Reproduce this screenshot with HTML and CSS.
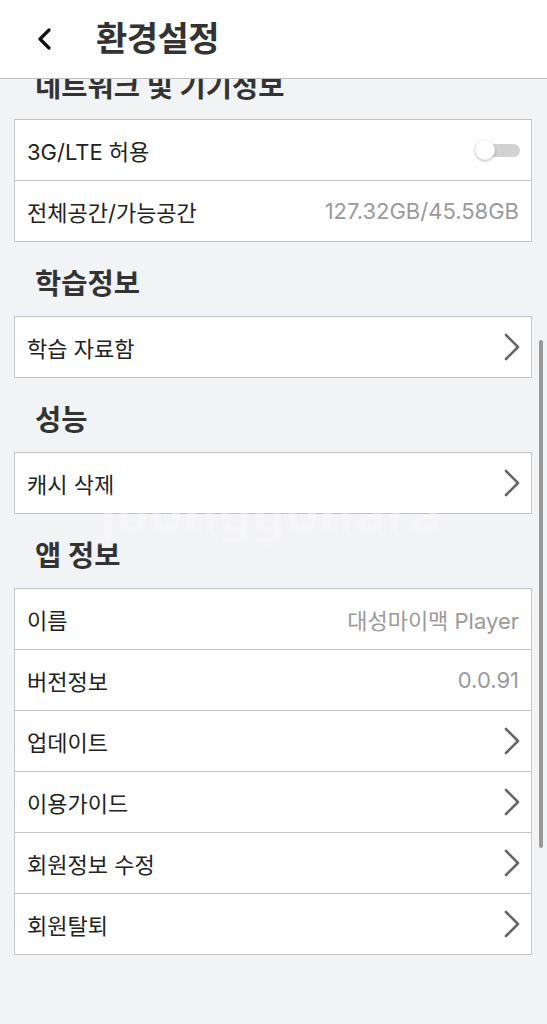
FILE: index.html
```html
<!DOCTYPE html>
<html lang="ko">
<head>
    <meta charset="UTF-8">
    <meta name="viewport" content="width=device-width, initial-scale=1.0">
    <title>환경설정</title>
    <link rel="stylesheet" href="styles.css">
</head>
<body>
    <div class="page">
        <header class="top-bar">
            <button class="back-button" type="button">
                <svg width="18" height="22" viewBox="0 0 18 22">
                    <path d="M13 2 L4 11 L13 20" fill="none" stroke="#111" stroke-width="3.2" stroke-linecap="round" stroke-linejoin="round"/>
                </svg>
            </button>
            <h1 class="top-title">환경설정</h1>
        </header>

        <main class="content">
            <div class="scroll-area">
                <h2 class="section-title first">네트워크 및 기기정보</h2>
                <div class="card">
                    <div class="row">
                        <span class="row-label">3G/LTE 허용</span>
                        <span class="toggle"><span class="toggle-knob"></span></span>
                    </div>
                    <div class="row">
                        <span class="row-label">전체공간/가능공간</span>
                        <span class="row-value">127.32GB/45.58GB</span>
                    </div>
                </div>

                <h2 class="section-title">학습정보</h2>
                <div class="card">
                    <div class="row">
                        <span class="row-label">학습 자료함</span>
                        <span class="chevron"><svg width="16" height="28" viewBox="0 0 16 28"><path d="M2 2 L14 14 L2 26" fill="none" stroke="#666" stroke-width="2.6" stroke-linecap="round" stroke-linejoin="round"/></svg></span>
                    </div>
                </div>

                <h2 class="section-title">성능</h2>
                <div class="card">
                    <div class="row">
                        <span class="row-label">캐시 삭제</span>
                        <span class="chevron"><svg width="16" height="28" viewBox="0 0 16 28"><path d="M2 2 L14 14 L2 26" fill="none" stroke="#666" stroke-width="2.6" stroke-linecap="round" stroke-linejoin="round"/></svg></span>
                    </div>
                </div>

                <h2 class="section-title">앱 정보</h2>
                <div class="card">
                    <div class="row">
                        <span class="row-label">이름</span>
                        <span class="row-value">대성마이맥 Player</span>
                    </div>
                    <div class="row">
                        <span class="row-label">버전정보</span>
                        <span class="row-value">0.0.91</span>
                    </div>
                    <div class="row">
                        <span class="row-label">업데이트</span>
                        <span class="chevron"><svg width="16" height="28" viewBox="0 0 16 28"><path d="M2 2 L14 14 L2 26" fill="none" stroke="#666" stroke-width="2.6" stroke-linecap="round" stroke-linejoin="round"/></svg></span>
                    </div>
                    <div class="row">
                        <span class="row-label">이용가이드</span>
                        <span class="chevron"><svg width="16" height="28" viewBox="0 0 16 28"><path d="M2 2 L14 14 L2 26" fill="none" stroke="#666" stroke-width="2.6" stroke-linecap="round" stroke-linejoin="round"/></svg></span>
                    </div>
                    <div class="row">
                        <span class="row-label">회원정보 수정</span>
                        <span class="chevron"><svg width="16" height="28" viewBox="0 0 16 28"><path d="M2 2 L14 14 L2 26" fill="none" stroke="#666" stroke-width="2.6" stroke-linecap="round" stroke-linejoin="round"/></svg></span>
                    </div>
                    <div class="row">
                        <span class="row-label">회원탈퇴</span>
                        <span class="chevron"><svg width="16" height="28" viewBox="0 0 16 28"><path d="M2 2 L14 14 L2 26" fill="none" stroke="#666" stroke-width="2.6" stroke-linecap="round" stroke-linejoin="round"/></svg></span>
                    </div>
                </div>
            </div>
            <div class="scroll-thumb"></div>
            <div class="watermark">joonggonara</div>
        </main>
    </div>
</body>
</html>
```

FILE: styles.css
```css
* {
    box-sizing: border-box;
}
body {
    font-family: "Inter", "Noto Sans CJK KR", sans-serif;
    margin: 0;
    padding: 0;
    background-color: #f2f3f5;
    color: #222222;
}
.page {
    width: 547px;
    height: 1024px;
    display: flex;
    flex-direction: column;
    overflow: hidden;
}
.top-bar {
    height: 79px;
    flex-shrink: 0;
    display: flex;
    align-items: center;
    background-color: #FFFFFF;
    border-bottom: 1px solid #bdbdbd;
    padding-left: 36px;
    position: relative;
    z-index: 2;
}
.back-button {
    background: none;
    border: none;
    padding: 0;
    width: 18px;
    height: 22px;
    display: flex;
    cursor: pointer;
}
.top-title {
    margin: 0 0 0 42px;
    font-size: 34px;
    font-weight: 700;
    color: #333333;
    line-height: 1;
    letter-spacing: -0.5px;
}
.content {
    flex: 1;
    position: relative;
    overflow: hidden;
}
.scroll-area {
    padding: 0 15px 0 14px;
}
.section-title {
    margin: 0;
    height: 74px;
    padding: 11px 0 0 21px;
    display: flex;
    align-items: center;
    font-size: 28.5px;
    font-weight: 700;
    color: #333333;
    line-height: 1;
}
.section-title.first {
    margin-top: -34px;
}
.card {
    background-color: #FFFFFF;
    border: 1px solid #c4c4c4;
}
.row {
    height: 61px;
    display: flex;
    align-items: center;
    justify-content: space-between;
    padding: 0 12px 0 12px;
    border-bottom: 1px solid #c4c4c4;
}
.row:last-child {
    height: 60px;
    border-bottom: none;
}
.row-label {
    font-size: 22px;
    color: #222222;
}
.row-value {
    font-size: 22px;
    color: #9a9a9a;
}
.chevron {
    display: flex;
    margin-right: -1px;
}
.toggle {
    position: relative;
    width: 45px;
    height: 13px;
    margin-right: -1px;
    border-radius: 7px;
    background-color: #d2d2d2;
}
.toggle-knob {
    position: absolute;
    left: 0;
    top: -4px;
    width: 20px;
    height: 20px;
    border-radius: 50%;
    background-color: #FFFFFF;
    box-shadow: 0 1px 3px rgba(0, 0, 0, 0.3);
}
.scroll-thumb {
    position: absolute;
    right: 4px;
    top: 261px;
    width: 4px;
    height: 508px;
    border-radius: 2px;
    background-color: #999999;
}
.watermark {
    position: absolute;
    left: 100px;
    top: 404px;
    font-family: "Noto Sans", sans-serif;
    font-size: 52px;
    font-weight: 700;
    letter-spacing: 1px;
    line-height: 1.1;
    color: rgba(255, 255, 255, 0.3);
    pointer-events: none;
}
```
